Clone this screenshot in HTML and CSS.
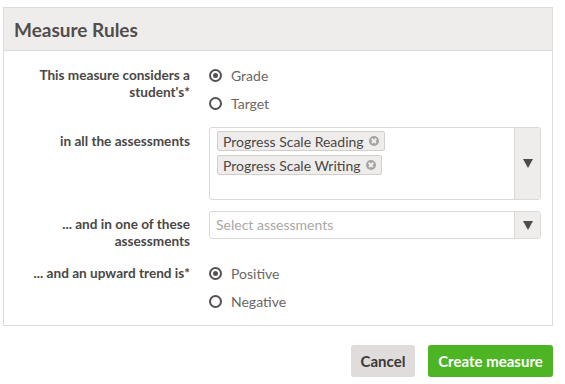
FILE: index.html
```html
<!DOCTYPE html>
<html lang="en">
<head>
  <meta charset="UTF-8">
  <meta name="viewport" content="width=device-width, initial-scale=1.0">
  <title>Measure Rules</title>
  <link rel="stylesheet" href="styles.css">
</head>
<body>

  <!-- Panel de reglas -->
  <div class="panel">
    <div class="panel-header">
      <h2>Measure Rules</h2>
    </div>
    <div class="panel-body">

      <div class="fila">
        <div class="etiqueta">This measure considers a student's*</div>
        <div class="opciones">
          <label class="radio"><span class="circulo marcado"></span>Grade</label>
          <label class="radio"><span class="circulo"></span>Target</label>
        </div>
      </div>

      <div class="fila">
        <div class="etiqueta etiqueta-caja">in all the assessments</div>
        <div class="selector multiple">
          <div class="valores">
            <span class="tag">Progress Scale Reading<span class="quitar"></span></span>
            <span class="tag">Progress Scale Writing<span class="quitar"></span></span>
          </div>
          <div class="flecha"></div>
        </div>
      </div>

      <div class="fila">
        <div class="etiqueta etiqueta-simple">... and in one of these assessments</div>
        <div class="selector simple">
          <div class="valores"><span class="placeholder">Select assessments</span></div>
          <div class="flecha"></div>
        </div>
      </div>

      <div class="fila">
        <div class="etiqueta">... and an upward trend is*</div>
        <div class="opciones">
          <label class="radio"><span class="circulo marcado"></span>Positive</label>
          <label class="radio"><span class="circulo"></span>Negative</label>
        </div>
      </div>

    </div>
  </div>

  <div class="acciones">
    <button class="btn btn-cancelar">Cancel</button>
    <button class="btn btn-crear">Create measure</button>
  </div>

</body>
</html>
```

FILE: styles.css
```css
body {
  margin: 0;
  padding: 7px 12px 0 3px;
  background-color: #fff;
  font-family: Lato, 'Open Sans', sans-serif;
  color: #4a4746;
}

.panel {
  width: 550px;
  box-sizing: border-box;
  border: 1px solid #dddbda;
}

.panel-header {
  background-color: #efedeb;
  border-bottom: 1px solid #dddbda;
  height: 42px;
  display: flex;
  align-items: center;
  padding: 0 10px;
}

.panel-header h2 {
  margin: 0;
  font-size: 19px;
  font-weight: bold;
  color: #524e4c;
}

.panel-body {
  padding: 14px 11px 10.5px 0;
  display: flex;
  flex-direction: column;
  gap: 11px;
}

.fila {
  display: flex;
  gap: 19px;
}

.etiqueta {
  width: 186px;
  flex-shrink: 0;
  text-align: right;
  font-size: 13.6px;
  font-weight: bold;
  line-height: 17px;
  padding-top: 1.5px;
  padding-left: 20px;
  box-sizing: border-box;
  color: #4a4746;
}

.etiqueta-caja {
  padding-top: 5.5px;
}

.etiqueta-simple {
  padding-top: 4.5px;
  padding-bottom: 2.5px;
  padding-left: 45px;
}

.opciones {
  display: flex;
  flex-direction: column;
  gap: 8px;
  padding-bottom: 3px;
}

.radio {
  display: flex;
  align-items: center;
  height: 20px;
  font-size: 14px;
  color: #6b6765;
}

.circulo {
  width: 13px;
  height: 13px;
  box-sizing: border-box;
  border: 2px solid #555150;
  border-radius: 50%;
  margin-right: 9px;
  display: flex;
  align-items: center;
  justify-content: center;
}

.circulo.marcado::after {
  content: '';
  width: 5px;
  height: 5px;
  border-radius: 50%;
  background-color: #555150;
}

/* Selectores */
.selector {
  width: 332px;
  box-sizing: border-box;
  border: 1px solid #dcdad9;
  border-radius: 3px;
  display: flex;
}

.multiple {
  height: 73px;
}

.simple {
  height: 28px;
}

.valores {
  flex: 1;
  padding: 3px 7px;
  display: flex;
  flex-direction: column;
  align-items: flex-start;
  gap: 4px;
}

.simple .valores {
  justify-content: center;
  padding: 0 6px 2px;
}

.placeholder {
  font-size: 14px;
  color: #aaa7a5;
}

.tag {
  display: flex;
  align-items: center;
  height: 20px;
  box-sizing: border-box;
  background-color: #efedeb;
  border: 1px solid #d2cfcd;
  border-radius: 2px;
  padding: 0 5px;
  font-size: 14px;
  color: #4a4746;
}

.quitar {
  width: 10px;
  height: 10px;
  border-radius: 50%;
  background-color: #a6a3a1;
  margin-left: 5px;
  position: relative;
}

.quitar::before,
.quitar::after {
  content: '';
  position: absolute;
  left: 2px;
  top: 4.25px;
  width: 6px;
  height: 1.5px;
  background-color: #efedeb;
  transform: rotate(45deg);
}

.quitar::after {
  transform: rotate(-45deg);
}

.flecha {
  width: 25px;
  background-color: #efedeb;
  border-left: 1px solid #dcdad9;
  border-radius: 0 2px 2px 0;
  display: flex;
  align-items: center;
  justify-content: center;
}

.flecha::after {
  content: '';
  border-left: 5.5px solid transparent;
  border-right: 5.5px solid transparent;
  border-top: 9px solid #4f4b49;
}

/* Botones */
.acciones {
  width: 550px;
  display: flex;
  justify-content: flex-end;
  gap: 13px;
  margin-top: 19px;
}

.btn {
  height: 32px;
  border: none;
  border-radius: 3px;
  font-family: Lato, 'Open Sans', sans-serif;
  font-size: 15px;
  font-weight: bold;
  padding: 0;
  white-space: nowrap;
  cursor: pointer;
}

.btn-cancelar {
  background-color: #e0dcdb;
  color: #3b3837;
  width: 64px;
}

.btn-crear {
  background-color: #4db523;
  color: #fff;
  width: 125px;
}
```
